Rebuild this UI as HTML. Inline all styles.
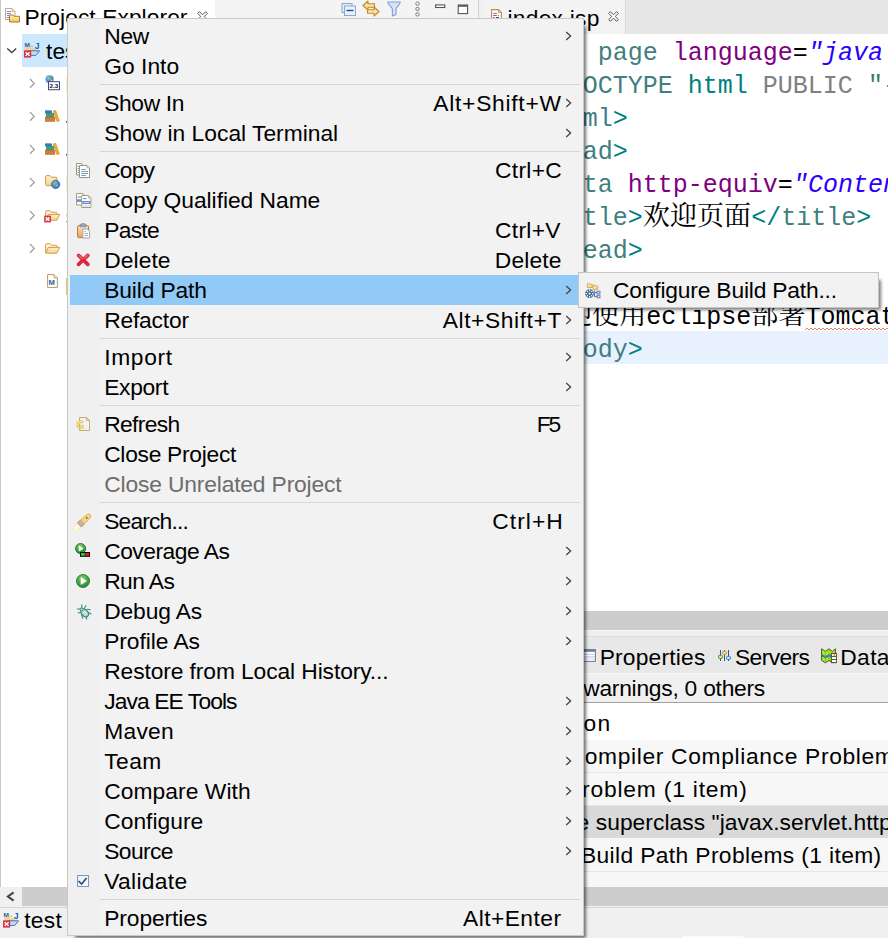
<!DOCTYPE html>
<html><head><meta charset="utf-8"><title>Eclipse</title>
<style>
html,body{margin:0;padding:0}
body{width:888px;height:938px;position:relative;overflow:hidden;background:#f0f0f0;font-family:"Liberation Sans","Noto Sans CJK SC",sans-serif;color:#000}
.a{position:absolute}
.t{position:absolute;white-space:pre;font-size:22.8px;line-height:30px;height:30px}
.dis{color:#6d6d6d}
.code{position:absolute;white-space:pre;font-family:"Liberation Mono","Noto Serif CJK SC",monospace;font-size:25px;line-height:33px;height:33px}
.cj{font-family:"Noto Serif CJK SC",serif;font-size:27.1px;line-height:0}
.teal{color:#3f7f7f}.tl2{color:#008080}.pur{color:#7f007f}.blu{color:#2a00ff;font-style:italic}.gry{color:#808080}.grn{color:#3f7f5f}
</style></head><body>

<svg width="0" height="0" style="position:absolute"><defs>
<linearGradient id="gfold" x1="0" y1="0" x2="0" y2="1"><stop offset="0" stop-color="#fff3c4"/><stop offset="1" stop-color="#f3c54f"/></linearGradient>
<linearGradient id="gfold2" x1="0" y1="0" x2="0" y2="1"><stop offset="0" stop-color="#fdf0cf"/><stop offset="1" stop-color="#f6d48a"/></linearGradient>
<radialGradient id="ggreen" cx="0.45" cy="0.3" r="0.8"><stop offset="0" stop-color="#8fd070"/><stop offset="0.6" stop-color="#3d9a44"/><stop offset="1" stop-color="#1f7a32"/></radialGradient>
<radialGradient id="gglobe" cx="0.4" cy="0.35" r="0.8"><stop offset="0" stop-color="#7ab8f0"/><stop offset="1" stop-color="#1f57b8"/></radialGradient>
<linearGradient id="gclip" x1="0" y1="0" x2="0" y2="1"><stop offset="0" stop-color="#fbe3b5"/><stop offset="1" stop-color="#e9a755"/></linearGradient>
<linearGradient id="gchk" x1="0" y1="0" x2="1" y2="1"><stop offset="0" stop-color="#d8f2fd"/><stop offset="1" stop-color="#ffffff"/></linearGradient>
<linearGradient id="gred" x1="0" y1="0" x2="0" y2="1"><stop offset="0" stop-color="#f2808a"/><stop offset="1" stop-color="#d82a3c"/></linearGradient>
</defs></svg>
<div class="a" style="left:0;top:0;width:479px;height:887px;background:#fff;border-left:1px solid #c8c8c8;border-right:1px solid #d0d0d0;box-sizing:border-box"></div>
<div class="a" style="left:215px;top:0;width:263px;height:31px;background:#f4f4f4"></div>
<div class="t" style="left:24.40px;top:2.0px;letter-spacing:0.060px;">Project Explorer</div>
<svg class="a" style="left:5px;top:7px" width="16" height="16" viewBox="0 0 16 16"><path d="M0.5 1.5 H7 L10 4.5 V12.5 H0.5 Z" fill="#fff" stroke="#b9ab86"/><path d="M7 1.5 V4.5 H10" fill="#e6d9b0" stroke="#b9ab86" stroke-width=".8"/><path d="M2 4.5 H6 M2 6.5 H6 M2 8.5 H5 M2 10.5 H4" stroke="#6f93d6" stroke-width="1"/><path d="M4.5 8 H8 L9 9.3 H14.5 V15 H4.5 Z" fill="url(#gfold)" stroke="#b27b2d"/></svg>
<svg class="a" style="left:197px;top:11px" width="11" height="11" viewBox="0 0 11 11"><path d="M0.7 2.4 L2.4 0.7 L5.5 3.8 L8.6 0.7 L10.3 2.4 L7.2 5.5 L10.3 8.6 L8.6 10.3 L5.5 7.2 L2.4 10.3 L0.7 8.6 L3.8 5.5 Z" fill="#fff" stroke="#555" stroke-width="1"/></svg>
<svg class="a" style="left:341px;top:3px" width="16" height="14" viewBox="0 0 16 14"><rect x="1" y="0.5" width="10" height="9" fill="#e3ecf9" stroke="#8fa6d0"/><rect x="3.5" y="3" width="11" height="9.5" fill="#eaf1fb" stroke="#8fa6d0"/><path d="M5.5 7.5 H12.5" stroke="#1f4e8c" stroke-width="1.4"/></svg>
<svg class="a" style="left:362px;top:0px" width="18" height="17" viewBox="0 0 18 17"><path d="M1 5.5 L6 1 V3.8 H12.5 V7.2 H6 V10 Z" fill="#fbe3a0" stroke="#c18a2a" stroke-width="1.1" stroke-linejoin="round"/><path d="M17 11.5 L12 7 V9.8 H5.5 V13.2 H12 V16 Z" fill="#fbe3a0" stroke="#c18a2a" stroke-width="1.1" stroke-linejoin="round"/></svg>
<svg class="a" style="left:387px;top:1px" width="14" height="16" viewBox="0 0 14 16"><path d="M0.7 1 H13.3 C13 4 9.2 6 9 8 V13.5 L5.4 15 V8 C5 6 1 4 0.7 1 Z" fill="#d5e4f7" stroke="#7f9fd3" stroke-width="1.1" stroke-linejoin="round"/></svg>
<svg class="a" style="left:414px;top:1px" width="7" height="16" viewBox="0 0 7 16"><circle cx="3.5" cy="2.6" r="1.7" fill="#fff" stroke="#666" stroke-width="0.9"/><circle cx="3.5" cy="8" r="1.7" fill="#fff" stroke="#666" stroke-width="0.9"/><circle cx="3.5" cy="13.4" r="1.7" fill="#fff" stroke="#666" stroke-width="0.9"/></svg>
<svg class="a" style="left:435px;top:4px" width="11" height="5" viewBox="0 0 11 5"><rect x="0.6" y="0.9" width="9.2" height="2.6" fill="#fff" stroke="#555" stroke-width="1.1"/></svg>
<svg class="a" style="left:457px;top:4px" width="12" height="11" viewBox="0 0 12 11"><rect x="1.2" y="1" width="9.4" height="8.6" fill="#fff" stroke="#555" stroke-width="1.1"/><path d="M1.2 2 H10.6" stroke="#555" stroke-width="1.6"/></svg>
<div class="a" style="left:22px;top:34px;width:60px;height:33px;background:#cce8ff"></div>
<div class="t" style="left:46.10px;top:36.0px;">test</div>
<svg class="a" style="left:6px;top:47px" width="12" height="8" viewBox="0 0 12 8"><path d="M1.2 1.5 L5.7 5.6 L10.2 1.5" fill="none" stroke="#404040" stroke-width="1.3"/></svg>
<svg class="a" style="left:24px;top:42px" width="16" height="16" viewBox="0 0 16 16"><text x="0.6" y="4.8" font-family="Liberation Sans, sans-serif" font-weight="bold" font-size="5.6" fill="#1c5aa8" textLength="5.4" lengthAdjust="spacingAndGlyphs">M</text><text x="10.8" y="6.6" font-family="Liberation Sans, sans-serif" font-weight="bold" font-size="8.6" fill="#1c5aa8">J</text><path d="M6.2 3.2 l1.4 1.2 l1.6 0" stroke="#e3b23c" stroke-width="1" fill="none"/><path d="M2 8.6 V5.8 H6.5 L7.5 7 H11.5 V8.6 Z" fill="#f7dc8d" stroke="#e4bb55" stroke-width=".6"/><path d="M4.5 8.8 H15.6 L11.8 13.4 H1.5 Z" fill="#c4daf6" stroke="#4a70bb" stroke-width="1"/><rect x="0" y="8.4" width="7.2" height="7.2" fill="#dc2f45"/><path d="M1.6 10.2 L5.6 13.8 M5.6 10.2 L1.6 13.8" stroke="#fff" stroke-width="1.5"/></svg>
<svg class="a" style="left:29px;top:78px" width="7" height="11" viewBox="0 0 7 11"><path d="M1 1 L5.2 5.4 L1 9.8" fill="none" stroke="#a0a0a0" stroke-width="1.3"/></svg>
<svg class="a" style="left:29px;top:111px" width="7" height="11" viewBox="0 0 7 11"><path d="M1 1 L5.2 5.4 L1 9.8" fill="none" stroke="#a0a0a0" stroke-width="1.3"/></svg>
<svg class="a" style="left:29px;top:144px" width="7" height="11" viewBox="0 0 7 11"><path d="M1 1 L5.2 5.4 L1 9.8" fill="none" stroke="#a0a0a0" stroke-width="1.3"/></svg>
<svg class="a" style="left:29px;top:177px" width="7" height="11" viewBox="0 0 7 11"><path d="M1 1 L5.2 5.4 L1 9.8" fill="none" stroke="#a0a0a0" stroke-width="1.3"/></svg>
<svg class="a" style="left:29px;top:210px" width="7" height="11" viewBox="0 0 7 11"><path d="M1 1 L5.2 5.4 L1 9.8" fill="none" stroke="#a0a0a0" stroke-width="1.3"/></svg>
<svg class="a" style="left:29px;top:243px" width="7" height="11" viewBox="0 0 7 11"><path d="M1 1 L5.2 5.4 L1 9.8" fill="none" stroke="#a0a0a0" stroke-width="1.3"/></svg>
<svg class="a" style="left:45px;top:75px" width="16" height="16" viewBox="0 0 16 16"><circle cx="4.6" cy="4.2" r="4" fill="url(#gglobe)" stroke="#9cc3ea" stroke-width=".8"/><path d="M2.2 3 q1.5 -1.8 3 -0.6 q0.4 1.6 -1 2.4 q-1.6 0.2 -2 -1.8 Z" fill="#8ccf4f"/><path d="M5.6 4.6 q1.4 -0.4 1.8 0.8 q-0.6 1.4 -1.6 1 Z" fill="#e8d35a"/><rect x="3.5" y="6.7" width="11" height="8" fill="#fff" stroke="#3c4a7c" stroke-width="1"/><text x="4.6" y="13.3" font-family="Liberation Sans, sans-serif" font-weight="bold" font-size="6.2" fill="#111" textLength="8.8" lengthAdjust="spacingAndGlyphs">2.3</text></svg>
<svg class="a" style="left:45px;top:110px" width="15" height="12" viewBox="0 0 15 12"><rect x="0.3" y="0.8" width="6.4" height="2.2" fill="#2b7fd0" stroke="#1d5c9f" stroke-width=".5"/><rect x="1.2" y="3.2" width="7.6" height="3.8" fill="#3fa477" stroke="#2c7c58" stroke-width=".5"/><rect x="0.3" y="7.2" width="9.6" height="4.2" fill="#cf7b3e" stroke="#a55a26" stroke-width=".5"/><path d="M8.2 0.9 L10.6 0.1 L14.4 10.9 L12 11.7 Z" fill="#f3ab33" stroke="#c9831d" stroke-width=".5"/></svg>
<svg class="a" style="left:45px;top:143px" width="15" height="12" viewBox="0 0 15 12"><rect x="0.3" y="0.8" width="6.4" height="2.2" fill="#2b7fd0" stroke="#1d5c9f" stroke-width=".5"/><rect x="1.2" y="3.2" width="7.6" height="3.8" fill="#3fa477" stroke="#2c7c58" stroke-width=".5"/><rect x="0.3" y="7.2" width="9.6" height="4.2" fill="#cf7b3e" stroke="#a55a26" stroke-width=".5"/><path d="M8.2 0.9 L10.6 0.1 L14.4 10.9 L12 11.7 Z" fill="#f3ab33" stroke="#c9831d" stroke-width=".5"/></svg>
<svg class="a" style="left:45px;top:175px" width="16" height="15" viewBox="0 0 16 15"><path d="M0.6 1.6 Q0.6 0.6 1.6 0.6 H5 L6.4 2.2 H11 Q12 2.2 12 3.2 V9.6 Q12 10.6 11 10.6 H1.6 Q0.6 10.6 0.6 9.6 Z" fill="url(#gfold2)" stroke="#d39a45" stroke-width="1"/><circle cx="10.6" cy="9.4" r="4.2" fill="url(#gglobe)" stroke="#1e4f9f" stroke-width=".6"/><path d="M8.4 8 q1.4 -2 3 -0.6 q0.4 1.8 -1 2.4 q-1.6 0.2 -2 -1.8 Z" fill="#7cc548"/><path d="M11.4 9.8 q1.2 -0.4 1.6 0.8 q-0.6 1.2 -1.4 0.8 Z" fill="#e8d35a"/></svg>
<svg class="a" style="left:45px;top:210px" width="16" height="14" viewBox="0 0 16 14" overflow="visible"><path d="M0.7 9.6 V1.8 Q0.7 0.7 1.8 0.7 H5 L6.4 2.3 H11 Q12 2.3 12 3.3 V4.4" fill="#fdf3d6" stroke="#d39a45" stroke-width="1"/><path d="M3.4 4.4 H14.8 L11.8 10.2 H0.8 Z" fill="url(#gfold2)" stroke="#d39a45" stroke-width="1" stroke-linejoin="round"/><rect x="-0.8" y="5.6" width="6.8" height="6.8" fill="#dc2f45"/><path d="M0.8 7.4 L4.4 10.6 M4.4 7.4 L0.8 10.6" stroke="#fff" stroke-width="1.5"/></svg>
<svg class="a" style="left:45px;top:243px" width="16" height="14" viewBox="0 0 16 14"><path d="M0.7 9.6 V1.8 Q0.7 0.7 1.8 0.7 H5 L6.4 2.3 H11 Q12 2.3 12 3.3 V4.4" fill="#fdf3d6" stroke="#d39a45" stroke-width="1"/><path d="M3.4 4.4 H14.8 L11.8 10.2 H0.8 Z" fill="url(#gfold2)" stroke="#d39a45" stroke-width="1" stroke-linejoin="round"/></svg>
<svg class="a" style="left:47px;top:274px" width="11" height="14" viewBox="0 0 11 14"><path d="M0.6 0.6 H7 L10.4 4 V13.4 H0.6 Z" fill="#fff" stroke="#b99a58" stroke-width="1"/><path d="M7 0.6 V4 H10.4" fill="#efe3c0" stroke="#b99a58" stroke-width=".8"/><text x="1.6" y="11.4" font-family="Liberation Sans, sans-serif" font-weight="bold" font-size="7.6" fill="#1d5ea9">M</text></svg>
<div class="t" style="left:65.20px;top:69.0px;">Deployment Descriptor: test</div>
<div class="t" style="left:65.80px;top:102.0px;">JAX-WS Web Services</div>
<div class="t" style="left:65.80px;top:135.0px;">Java Resources</div>
<div class="t" style="left:65.20px;top:168.0px;">Deployed Resources</div>
<div class="t" style="left:65.80px;top:201.0px;">src</div>
<div class="t" style="left:66.80px;top:234.0px;">target</div>
<div class="t" style="left:65.20px;top:267.0px;">pom.xml</div>
<div class="a" style="left:1px;top:887px;width:478px;height:19px;background:#f0f0f0"></div>
<div class="a" style="left:22px;top:887px;width:200px;height:19px;background:#cdcdcd"></div>
<svg class="a" style="left:6px;top:890px" width="10" height="14" viewBox="0 0 10 14"><path d="M7.6 2.3 L1.9 6.5 L7.6 10.7" fill="none" stroke="#454545" stroke-width="2.1"/></svg>
<div class="a" style="left:0;top:907px;width:888px;height:1px;background:#d6d6d6"></div>
<div class="t" style="left:24.30px;top:905.0px;letter-spacing:0.233px;">test</div>
<svg class="a" style="left:3px;top:912px" width="16" height="16" viewBox="0 0 16 16"><text x="0.6" y="4.8" font-family="Liberation Sans, sans-serif" font-weight="bold" font-size="5.6" fill="#1c5aa8" textLength="5.4" lengthAdjust="spacingAndGlyphs">M</text><text x="10.8" y="6.6" font-family="Liberation Sans, sans-serif" font-weight="bold" font-size="8.6" fill="#1c5aa8">J</text><path d="M6.2 3.2 l1.4 1.2 l1.6 0" stroke="#e3b23c" stroke-width="1" fill="none"/><path d="M2 8.6 V5.8 H6.5 L7.5 7 H11.5 V8.6 Z" fill="#f7dc8d" stroke="#e4bb55" stroke-width=".6"/><path d="M4.5 8.8 H15.6 L11.8 13.4 H1.5 Z" fill="#c4daf6" stroke="#4a70bb" stroke-width="1"/><rect x="0" y="8.4" width="7.2" height="7.2" fill="#dc2f45"/><path d="M1.6 10.2 L5.6 13.8 M5.6 10.2 L1.6 13.8" stroke="#fff" stroke-width="1.5"/></svg>
<div class="a" style="left:484px;top:0;width:404px;height:34px;background:#e7e7e7"></div>
<div class="a" style="left:484px;top:0;width:142px;height:34px;background:#f3f3f3;border-right:1px solid #dadada;box-sizing:border-box"></div>
<div class="t" style="left:507.50px;top:2.5px;letter-spacing:0.237px;">index.jsp</div>
<svg class="a" style="left:491px;top:9px" width="11" height="14" viewBox="0 0 11 14"><path d="M0.6 0.6 H7.4 L10.4 3.6 V13.4 H0.6 Z" fill="#fff" stroke="#b39343" stroke-width="1.1"/><path d="M7.4 0.6 V3.6 H10.4 Z" fill="#ead9a0" stroke="#b39343" stroke-width=".8"/><path d="M2.2 4.4 H6" stroke="#e8475a" stroke-width="1"/><path d="M2.2 6.5 H5.8 M7 6.5 H8" stroke="#4a6fb0" stroke-width="1"/><path d="M2.2 8.5 H3.8" stroke="#e8475a" stroke-width="1"/><path d="M5 8.5 H8" stroke="#2d4f94" stroke-width="1"/><path d="M2.2 10.5 H6" stroke="#4a6fb0" stroke-width="1"/></svg>
<svg class="a" style="left:608px;top:11px" width="11" height="11" viewBox="0 0 11 11"><path d="M0.7 2.4 L2.4 0.7 L5.5 3.8 L8.6 0.7 L10.3 2.4 L7.2 5.5 L10.3 8.6 L8.6 10.3 L5.5 7.2 L2.4 10.3 L0.7 8.6 L3.8 5.5 Z" fill="#fff" stroke="#555" stroke-width="1"/></svg>
<div class="a" style="left:484px;top:34px;width:404px;height:577px;background:#fff"></div>
<div class="a" style="left:484px;top:331px;width:404px;height:33px;background:#e8f2fe"></div>
<div class="code" style="left:597.8px;top:37px"><span class="teal">page</span> <span class="pur">language</span>=<span class="blu">"java</span></div>
<div class="code" style="left:582.8px;top:70px"><span class="teal">OCTYPE</span> <span class="tl2">html</span> <span class="gry">PUBLIC</span> <span class="grn">"-//W3C</span></div>
<div class="code" style="left:582.8px;top:103px"><span class="teal">ml</span><span class="tl2">&gt;</span></div>
<div class="code" style="left:582.8px;top:136px"><span class="teal">ad</span><span class="tl2">&gt;</span></div>
<div class="code" style="left:582.8px;top:169px"><span class="teal">ta</span> <span class="pur">http-equiv</span>=<span class="blu">"Content</span></div>
<div class="code" style="left:582.8px;top:202px"><span class="teal">tle</span><span class="tl2">&gt;</span><span class="cj">欢迎页面</span><span class="tl2">&lt;/</span><span class="teal">title</span><span class="tl2">&gt;</span></div>
<div class="code" style="left:582.8px;top:235px"><span class="teal">ead</span><span class="tl2">&gt;</span></div>
<div class="code" style="left:565.0px;top:301px"><span class="cj">迎使用</span>eclipse<span class="cj">部署</span>Tomcat</div>
<div class="code" style="left:582.8px;top:334px"><span class="teal">ody</span><span class="tl2">&gt;</span></div>
<svg class="a" style="left:805px;top:327px" width="83" height="4" viewBox="0 0 83 4"><path d="M0 3 L2 1 L4 3 L6 1 L8 3 L10 1 L12 3 L14 1 L16 3 L18 1 L20 3 L22 1 L24 3 L26 1 L28 3 L30 1 L32 3 L34 1 L36 3 L38 1 L40 3 L42 1 L44 3 L46 1 L48 3 L50 1 L52 3 L54 1 L56 3 L58 1 L60 3 L62 1 L64 3 L66 1 L68 3 L70 1 L72 3 L74 1 L76 3 L78 1 L80 3 L82 1 L84 3" fill="none" stroke="#f0845c" stroke-width="1"/></svg>
<div class="a" style="left:484px;top:611px;width:404px;height:19px;background:#cdcdcd"></div>
<div class="a" style="left:484px;top:630px;width:404px;height:6px;background:#efefef;border-top:1px solid #f6f6f6;box-sizing:border-box"></div>
<div class="a" style="left:484px;top:636px;width:404px;height:37px;background:#e8e8e8;border-top:1px solid #dcdcdc;box-sizing:border-box"></div>
<div class="a" style="left:484px;top:673px;width:404px;height:29px;background:#f0f0f0;border-top:1px solid #f8f8f8;box-sizing:border-box"></div>
<div class="a" style="left:484px;top:702px;width:404px;height:1px;background:#a0a0a0"></div>
<div class="a" style="left:484px;top:703px;width:404px;height:37px;background:#fff"></div>
<div class="a" style="left:484px;top:740px;width:404px;height:147px;background:#f7f7f7"></div>
<div class="a" style="left:484px;top:772px;width:404px;height:1px;background:#e6e6e6"></div>
<div class="a" style="left:484px;top:805px;width:404px;height:1px;background:#e6e6e6"></div>
<div class="a" style="left:484px;top:871px;width:404px;height:1px;background:#e6e6e6"></div>
<div class="a" style="left:484px;top:806px;width:404px;height:32px;background:#d9d9d9"></div>
<div class="a" style="left:484px;top:887px;width:404px;height:19px;background:#cdcdcd"></div>
<div class="a" style="left:682px;top:936px;width:61px;height:2px;background:#fbfbfb"></div>
<svg class="a" style="left:582px;top:649px" width="14" height="13" viewBox="0 0 14 13"><rect x="0.6" y="0.6" width="12.8" height="11.8" fill="#fff" stroke="#6c80a6" stroke-width="1.1"/><rect x="0.6" y="0.6" width="12.8" height="2.2" fill="#6c80a6"/><path d="M1 5.4 H13 M1 7.6 H13 M1 9.8 H13" stroke="#c5cbd9" stroke-width=".9"/><rect x="1.2" y="7.8" width="11.6" height="1.8" fill="#e6e9f1"/></svg>
<svg class="a" style="left:717px;top:649px" width="15" height="13" viewBox="0 0 15 13"><path d="M3.5 1 V12 M7.5 1 V12 M11.5 1 V12" stroke="#2a37a6" stroke-width="0.9"/><rect x="1.4" y="6.3" width="4.2" height="3.2" rx="1.4" fill="#dcea5a" stroke="#2f8f58" stroke-width="0.9"/><rect x="5.4" y="2.2" width="4.2" height="3.2" rx="1.4" fill="#f6dd7a" stroke="#c7921a" stroke-width="0.9"/><rect x="9.4" y="7.3" width="4.2" height="3.2" rx="1.4" fill="#b4eef2" stroke="#4272b6" stroke-width="0.9"/></svg>
<svg class="a" style="left:821px;top:648px" width="16" height="16" viewBox="0 0 16 16"><path d="M0.6 0.8 L4.4 3.4 L8 0.8 L11.4 3.4 L14.4 0.8 V12.4 L11.4 14.6 L8 12.4 L4.4 14.8 L0.6 12.4 Z" fill="#aaf022" stroke="#55512f" stroke-width="1" stroke-linejoin="round"/><path d="M1 6 L4.4 8 L8 6 L10.4 6.8 V9.4 L8 9 L4.4 10.6 L1 8.6 Z" fill="#2a84c8"/><path d="M4.4 3.4 V14.6 M8 0.8 V12.4" stroke="#7fae1c" stroke-width=".8"/><rect x="10.4" y="5.4" width="5.2" height="9.2" fill="#fff" stroke="#5a5632" stroke-width="1.1"/><path d="M10.4 8.5 H15.6 M10.4 11.5 H15.6" stroke="#5a5632" stroke-width="1"/><circle cx="13.2" cy="7" r="0.8" fill="#e22"/><circle cx="14.4" cy="7" r="0.6" fill="#9e2"/></svg>
<div class="t" style="left:599.70px;top:642.0px;letter-spacing:0.189px;">Properties</div>
<div class="t" style="left:735.00px;top:642.0px;letter-spacing:-0.600px;">Servers</div>
<div class="t" style="left:840.30px;top:642.0px;letter-spacing:0.350px;">Data Source Explorer</div>
<div class="t" style="left:583.20px;top:673.0px;letter-spacing:-0.247px;">warnings, 0 others</div>
<div class="t" style="left:583.50px;top:708.0px;letter-spacing:1.200px;">on</div>
<div class="t" style="left:584.70px;top:741.0px;letter-spacing:0.660px;">ompiler Compliance Problem (1 item)</div>
<div class="t" style="left:582.00px;top:774.0px;letter-spacing:0.821px;">roblem (1 item)</div>
<div class="t" style="left:576.60px;top:807.0px;letter-spacing:0.050px;">e superclass "javax.servlet.http.HttpServlet" was not found</div>
<div class="t" style="left:581.00px;top:840.0px;letter-spacing:0.370px;">Build Path Problems (1 item)</div>
<div class="a" style="left:67px;top:18px;width:517px;height:918px;background:#f2f2f2;border:1px solid #c9c9c9;box-sizing:border-box;box-shadow:5px 5px 3px -3px rgba(0,0,0,.55)"></div>
<div class="a" style="left:68px;top:19px;width:32px;height:916px;background:#f0f0f0"></div>
<div class="a" style="left:70px;top:275px;width:508px;height:30px;background:#91c9f7"></div>
<div class="a" style="left:100px;top:84px;width:480px;height:1px;background:#d7d7d7"></div>
<div class="a" style="left:100px;top:151px;width:480px;height:1px;background:#d7d7d7"></div>
<div class="a" style="left:100px;top:338px;width:480px;height:1px;background:#d7d7d7"></div>
<div class="a" style="left:100px;top:405px;width:480px;height:1px;background:#d7d7d7"></div>
<div class="a" style="left:100px;top:502px;width:480px;height:1px;background:#d7d7d7"></div>
<div class="a" style="left:100px;top:899px;width:480px;height:1px;background:#d7d7d7"></div>
<div class="t" style="left:104.20px;top:21.0px;letter-spacing:-0.250px;">New</div>
<svg class="a" style="left:565px;top:30.8px" width="8" height="12" viewBox="0 0 8 12"><path d="M1.2 1.1 L5.6 5 L1.2 8.9" fill="none" stroke="#444" stroke-width="1.3"/></svg>
<div class="t" style="left:104.20px;top:51.0px;letter-spacing:0.033px;">Go Into</div>
<div class="t" style="left:104.20px;top:88.0px;letter-spacing:-0.350px;">Show In</div>
<div class="t" style="left:433.30px;top:88.0px;letter-spacing:0.730px;">Alt+Shift+W</div>
<svg class="a" style="left:565px;top:97.8px" width="8" height="12" viewBox="0 0 8 12"><path d="M1.2 1.1 L5.6 5 L1.2 8.9" fill="none" stroke="#444" stroke-width="1.3"/></svg>
<div class="t" style="left:104.20px;top:118.0px;">Show in Local Terminal</div>
<svg class="a" style="left:565px;top:127.8px" width="8" height="12" viewBox="0 0 8 12"><path d="M1.2 1.1 L5.6 5 L1.2 8.9" fill="none" stroke="#444" stroke-width="1.3"/></svg>
<div class="t" style="left:104.20px;top:155.0px;letter-spacing:-0.833px;">Copy</div>
<div class="t" style="left:495.00px;top:155.0px;letter-spacing:0.320px;">Ctrl+C</div>
<div class="t" style="left:104.20px;top:185.0px;letter-spacing:-0.033px;">Copy Qualified Name</div>
<div class="t" style="left:104.20px;top:215.0px;letter-spacing:-0.700px;">Paste</div>
<div class="t" style="left:495.00px;top:215.0px;letter-spacing:0.320px;">Ctrl+V</div>
<div class="t" style="left:104.20px;top:245.0px;letter-spacing:0.080px;">Delete</div>
<div class="t" style="left:494.80px;top:245.0px;letter-spacing:0.160px;">Delete</div>
<div class="t" style="left:104.20px;top:275.0px;letter-spacing:-0.122px;">Build Path</div>
<svg class="a" style="left:565px;top:284.8px" width="8" height="12" viewBox="0 0 8 12"><path d="M1.2 1.1 L5.6 5 L1.2 8.9" fill="none" stroke="#444" stroke-width="1.3"/></svg>
<div class="t" style="left:104.20px;top:305.0px;letter-spacing:-0.186px;">Refactor</div>
<div class="t" style="left:442.70px;top:305.0px;letter-spacing:0.590px;">Alt+Shift+T</div>
<svg class="a" style="left:565px;top:314.8px" width="8" height="12" viewBox="0 0 8 12"><path d="M1.2 1.1 L5.6 5 L1.2 8.9" fill="none" stroke="#444" stroke-width="1.3"/></svg>
<div class="t" style="left:104.20px;top:342.0px;letter-spacing:0.680px;">Import</div>
<svg class="a" style="left:565px;top:351.8px" width="8" height="12" viewBox="0 0 8 12"><path d="M1.2 1.1 L5.6 5 L1.2 8.9" fill="none" stroke="#444" stroke-width="1.3"/></svg>
<div class="t" style="left:104.20px;top:372.0px;letter-spacing:-0.320px;">Export</div>
<svg class="a" style="left:565px;top:381.8px" width="8" height="12" viewBox="0 0 8 12"><path d="M1.2 1.1 L5.6 5 L1.2 8.9" fill="none" stroke="#444" stroke-width="1.3"/></svg>
<div class="t" style="left:104.20px;top:409.0px;letter-spacing:-0.633px;">Refresh</div>
<div class="t" style="left:536.70px;top:409.0px;letter-spacing:-2.100px;">F5</div>
<div class="t" style="left:104.20px;top:439.0px;letter-spacing:-0.283px;">Close Project</div>
<div class="t dis" style="left:104.20px;top:469.0px;letter-spacing:-0.150px;">Close Unrelated Project</div>
<div class="t" style="left:104.20px;top:506.0px;letter-spacing:-0.838px;">Search...</div>
<div class="t" style="left:492.30px;top:506.0px;letter-spacing:1.060px;">Ctrl+H</div>
<div class="t" style="left:104.20px;top:536.0px;letter-spacing:-0.480px;">Coverage As</div>
<svg class="a" style="left:565px;top:545.8px" width="8" height="12" viewBox="0 0 8 12"><path d="M1.2 1.1 L5.6 5 L1.2 8.9" fill="none" stroke="#444" stroke-width="1.3"/></svg>
<div class="t" style="left:104.20px;top:566.0px;letter-spacing:-0.580px;">Run As</div>
<svg class="a" style="left:565px;top:575.8px" width="8" height="12" viewBox="0 0 8 12"><path d="M1.2 1.1 L5.6 5 L1.2 8.9" fill="none" stroke="#444" stroke-width="1.3"/></svg>
<div class="t" style="left:104.20px;top:596.0px;letter-spacing:-0.114px;">Debug As</div>
<svg class="a" style="left:565px;top:605.8px" width="8" height="12" viewBox="0 0 8 12"><path d="M1.2 1.1 L5.6 5 L1.2 8.9" fill="none" stroke="#444" stroke-width="1.3"/></svg>
<div class="t" style="left:104.20px;top:626.0px;letter-spacing:-0.056px;">Profile As</div>
<svg class="a" style="left:565px;top:635.8px" width="8" height="12" viewBox="0 0 8 12"><path d="M1.2 1.1 L5.6 5 L1.2 8.9" fill="none" stroke="#444" stroke-width="1.3"/></svg>
<div class="t" style="left:104.20px;top:656.0px;letter-spacing:-0.096px;">Restore from Local History...</div>
<div class="t" style="left:104.20px;top:686.0px;letter-spacing:-0.892px;">Java EE Tools</div>
<svg class="a" style="left:565px;top:695.8px" width="8" height="12" viewBox="0 0 8 12"><path d="M1.2 1.1 L5.6 5 L1.2 8.9" fill="none" stroke="#444" stroke-width="1.3"/></svg>
<div class="t" style="left:104.20px;top:716.0px;letter-spacing:0.275px;">Maven</div>
<svg class="a" style="left:565px;top:725.8px" width="8" height="12" viewBox="0 0 8 12"><path d="M1.2 1.1 L5.6 5 L1.2 8.9" fill="none" stroke="#444" stroke-width="1.3"/></svg>
<div class="t" style="left:104.20px;top:746.0px;letter-spacing:0.433px;">Team</div>
<svg class="a" style="left:565px;top:755.8px" width="8" height="12" viewBox="0 0 8 12"><path d="M1.2 1.1 L5.6 5 L1.2 8.9" fill="none" stroke="#444" stroke-width="1.3"/></svg>
<div class="t" style="left:104.20px;top:776.0px;letter-spacing:0.073px;">Compare With</div>
<svg class="a" style="left:565px;top:785.8px" width="8" height="12" viewBox="0 0 8 12"><path d="M1.2 1.1 L5.6 5 L1.2 8.9" fill="none" stroke="#444" stroke-width="1.3"/></svg>
<div class="t" style="left:104.20px;top:806.0px;letter-spacing:0.025px;">Configure</div>
<svg class="a" style="left:565px;top:815.8px" width="8" height="12" viewBox="0 0 8 12"><path d="M1.2 1.1 L5.6 5 L1.2 8.9" fill="none" stroke="#444" stroke-width="1.3"/></svg>
<div class="t" style="left:104.20px;top:836.0px;letter-spacing:-0.580px;">Source</div>
<svg class="a" style="left:565px;top:845.8px" width="8" height="12" viewBox="0 0 8 12"><path d="M1.2 1.1 L5.6 5 L1.2 8.9" fill="none" stroke="#444" stroke-width="1.3"/></svg>
<div class="t" style="left:104.20px;top:866.0px;letter-spacing:0.329px;">Validate</div>
<div class="t" style="left:104.20px;top:903.0px;letter-spacing:-0.089px;">Properties</div>
<div class="t" style="left:463.00px;top:903.0px;letter-spacing:0.450px;">Alt+Enter</div>
<svg class="a" style="left:76px;top:163px" width="15" height="16" viewBox="0 0 15 16"><path d="M0.5 0.5 H5.5 L8 3 V12 H0.5 Z" fill="#fff" stroke="#9b957a" stroke-width="1"/><path d="M5.5 0.5 V3 H8" fill="#e8dcae" stroke="#b5a56b" stroke-width=".7"/><path d="M1.6 3.5 H3 M1.6 5.5 H3 M1.6 7.5 H3 M1.6 9.5 H3" stroke="#7f9cc6" stroke-width="1"/><path d="M3.5 2.5 H11 L13.5 5 V14.5 H3.5 Z" fill="#fff" stroke="#9b957a" stroke-width="1"/><path d="M11 2.5 V5 H13.5" fill="#e8dcae" stroke="#b5a56b" stroke-width=".7"/><path d="M5.2 6.5 H10 M5.2 8.5 H12 M5.2 10.5 H12 M5.2 12.5 H10" stroke="#7f9cc6" stroke-width="1"/></svg>
<svg class="a" style="left:76px;top:193px" width="16" height="16" viewBox="0 0 16 16"><path d="M0.5 0.5 H7 L9.5 3 V12 H0.5 Z" fill="#fff" stroke="#a39c7c" stroke-width="1"/><path d="M7 0.5 V3 H9.5" fill="#e8dcae" stroke="#b5a56b" stroke-width=".7"/><path d="M1.6 4 H5 " stroke="#7f9cc6" stroke-width="1.2"/><rect x="1" y="6.3" width="5" height="2.6" fill="#6d8dc8"/><path d="M5.7 2.5 H12.4 L14.9 5 V14.5 H5.7 Z" fill="#fff" stroke="#a39c7c" stroke-width="1"/><path d="M12.4 2.5 V5 H14.9" fill="#e8dcae" stroke="#b5a56b" stroke-width=".7"/><path d="M7.4 5.6 H10.4" stroke="#6d8dc8" stroke-width="1.2"/><rect x="6.2" y="8" width="8.2" height="3" fill="#6d8dc8"/><path d="M7.6 9.5 H13" stroke="#c9d6ef" stroke-width="1"/><rect x="6.2" y="11.6" width="8.2" height="2.4" fill="#dfe5f3"/></svg>
<svg class="a" style="left:77px;top:223px" width="14" height="16" viewBox="0 0 14 16"><rect x="0.6" y="2.6" width="11" height="12" rx="1" fill="url(#gclip)" stroke="#b9783a" stroke-width="1"/><path d="M3 3.6 V2 Q3 1.2 3.8 1.2 H4.6 Q5 0.2 6.1 0.2 Q7.2 0.2 7.6 1.2 H8.4 Q9.2 1.2 9.2 2 V3.6 Z" fill="#97a3bf" stroke="#6f7c9c" stroke-width=".7"/><path d="M5.8 6 H10.3 L12.6 8.3 V15 H5.8 Z" fill="#fff" stroke="#9aa0a8" stroke-width=".9"/><path d="M7.4 8.4 H9 M7.4 10.4 H11 M7.4 12.4 H11" stroke="#8fb0d8" stroke-width="1"/></svg>
<svg class="a" style="left:76px;top:253px" width="15" height="14" viewBox="0 0 15 14"><path d="M2.6 2.4 L11.8 11.4 M11.8 2.4 L2.6 11.4" stroke="#d9283c" stroke-width="3.6" stroke-linecap="round"/><path d="M3 2.4 L6.4 5.8 M11.4 2.4 L8.6 5.2" stroke="#f06a78" stroke-width="1.4" stroke-linecap="round"/></svg>
<svg class="a" style="left:76px;top:416px" width="15" height="16" viewBox="0 0 15 16"><path d="M3.5 1.5 H10.5 L13.5 4.5 V14.5 H3.5 Z" fill="#eef2fb" stroke="#c6ad6a" stroke-width="1"/><path d="M10.5 1.5 V4.5 H13.5 Z" fill="#e3cf8e" stroke="#c6ad6a" stroke-width=".8"/><path d="M7.4 5.4 Q3.2 3.2 1.6 6.8 L0.6 6.2 L1.6 9.4 L4.6 8 L3.4 7.5 Q4.6 5.6 6.6 7 Z" fill="#f8dc7a" stroke="#e3b84e" stroke-width=".6"/><path d="M0.4 10 Q3.6 15.2 6.6 11.8 L7.6 12.6 L7 9 L3.8 10.2 L5 10.8 Q3.4 12.4 1.4 9.6 Z" fill="#f8dc7a" stroke="#e3b84e" stroke-width=".6"/></svg>
<svg class="a" style="left:74px;top:513px" width="18" height="17" viewBox="0 0 18 17"><g transform="rotate(-43 9 8.5)"><path d="M-2.4 6.2 H4.4 V10.8 H-2.4 Z" fill="#fffbe0" stroke="#f3d877" stroke-width=".7"/><rect x="4" y="5.6" width="4.2" height="5.8" rx="1" fill="#b9b6bd" stroke="#a58a4a" stroke-width=".8"/><path d="M8.2 6 H15.4 L18.8 7.4 V9.6 L15.4 11 H8.2 Z" fill="#f9d777" stroke="#d7a23a" stroke-width=".8"/><circle cx="14.2" cy="8.5" r="0.9" fill="#2f5fb4"/></g></svg>
<svg class="a" style="left:75px;top:543px" width="16" height="14" viewBox="0 0 16 14"><circle cx="5.6" cy="5.6" r="5.1" fill="url(#ggreen)" stroke="#1f7d33" stroke-width=".9"/><path d="M3.8 2.6 L8.6 5.6 L3.8 8.6 Z" fill="#fff"/><rect x="5" y="9" width="10" height="4.8" fill="#000"/><rect x="6" y="10" width="3.8" height="2.8" fill="#16d62c"/><rect x="10.2" y="10" width="3.8" height="2.8" fill="#e8151f"/></svg>
<svg class="a" style="left:76px;top:574px" width="14" height="14" viewBox="0 0 14 14"><circle cx="7" cy="7" r="6.5" fill="url(#ggreen)" stroke="#1f7d33" stroke-width=".9"/><path d="M4.7 3 L10.9 7 L4.7 11 Z" fill="#fff"/></svg>
<svg class="a" style="left:76px;top:604px" width="16" height="16" viewBox="0 0 16 16"><g stroke="#3a8a72" stroke-width="1.1" stroke-linecap="round" fill="none"><path d="M5.8 0.8 V3.6 M9.8 1.8 L8.6 4 M1.4 5 H4.4 M2.4 9 L4.6 8.2 M11.4 5.2 L14.2 5.8 M12.6 8.6 L15 10 M5.6 10.8 L6.8 14.2 M9.4 12.6 L10.8 15"/></g><ellipse cx="8.6" cy="8.8" rx="3.2" ry="4.6" transform="rotate(-42 8.6 8.8)" fill="#b9dcae" stroke="#2b7a9c" stroke-width="1.1"/><circle cx="5.6" cy="5.4" r="1.5" fill="#d9ecc8" stroke="#2b7a9c" stroke-width="1"/><path d="M7 8.4 L10.6 10.6 M8 7 L11 9" stroke="#e8f5e0" stroke-width=".8"/></svg>
<svg class="a" style="left:77px;top:875px" width="12" height="12" viewBox="0 0 12 12"><rect x="0.5" y="0.5" width="11" height="11" fill="url(#gchk)" stroke="#8593b3" stroke-width="1"/><path d="M1.6 6 L4.6 9 L9.6 3" fill="none" stroke="#2b4a72" stroke-width="1.6"/></svg>
<div class="a" style="left:578px;top:272px;width:301px;height:35.5px;background:#f2f2f2;border:1px solid #c4c4c4;box-sizing:border-box;box-shadow:5px 5px 3px -3px rgba(0,0,0,.5)"></div>
<div class="t" style="left:613.00px;top:275.0px;letter-spacing:-0.182px;">Configure Build Path...</div>
<svg class="a" style="left:585px;top:283px" width="16" height="16" viewBox="0 0 16 16"><path d="M2.4 4.6 V1.2 Q2.4 0.4 3.2 0.4 H4.6 L5.4 1.3 H7.2 V4.6 Z" fill="#f9df8f" stroke="#c99a52" stroke-width=".8"/><path d="M8 6.4 V3 Q8 2.2 8.8 2.2 H10.2 L11 3.1 H12.8 V6.4 Z" fill="#f9df8f" stroke="#c99a52" stroke-width=".8"/><circle cx="4.6" cy="10.6" r="4.4" fill="#41618d"/><g stroke="#fff" stroke-width="1.2"><path d="M4.6 6.8 V8.4 M4.6 12.8 V14.4 M0.8 10.6 H2.4 M6.8 10.6 H8.4 M1.9 7.9 L3 9 M6.2 12.2 L7.3 13.3 M1.9 13.3 L3 12.2 M6.2 9 L7.3 7.9"/></g><circle cx="4.6" cy="10.6" r="2.3" fill="#41618d"/><circle cx="4.6" cy="10.6" r="1.1" fill="#fff"/><path d="M9.6 7.6 V14 M9.6 9.6 H12 M9.6 13.6 H12" stroke="#5a7ab2" stroke-width="1" fill="none"/><rect x="12" y="8.2" width="3" height="2.6" fill="#cfdcf0" stroke="#5a7ab2" stroke-width=".9"/><rect x="12" y="12.2" width="3" height="2.6" fill="#cfdcf0" stroke="#5a7ab2" stroke-width=".9"/></svg>
</body></html>
